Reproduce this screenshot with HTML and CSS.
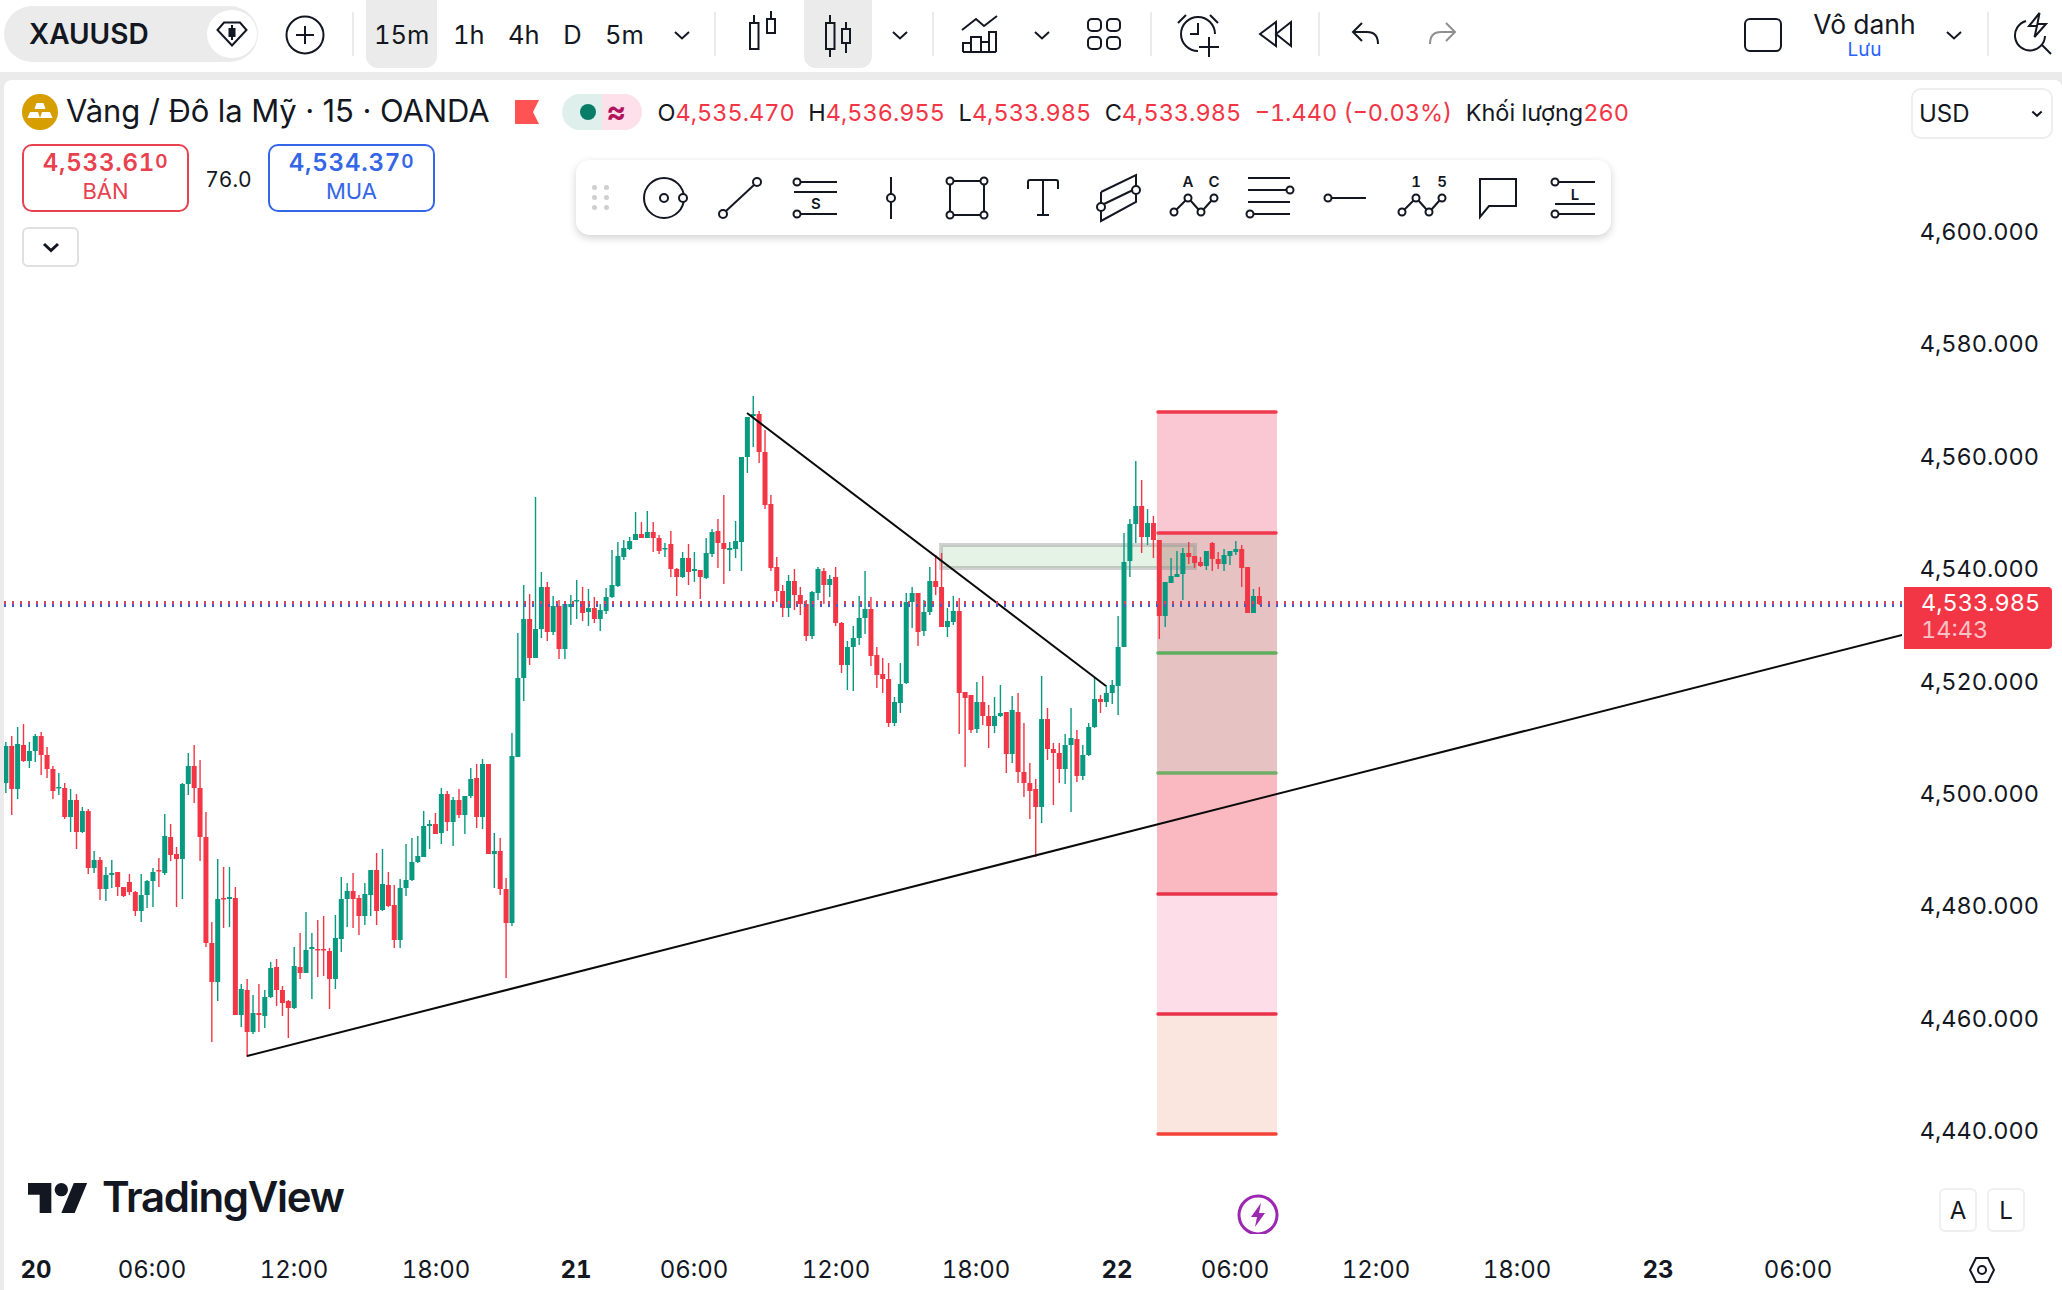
FILE: index.html
```html
<!DOCTYPE html>
<html lang="vi">
<head>
  <meta charset="UTF-8">
  <title>XAUUSD</title>
  <link rel="stylesheet" href="styles.css">
</head>
<body>
  <div class="app">
    <header class="topbar">
      <div class="symbol">
        <span class="symbol-name">XAUUSD</span>
        <span class="symbol-badge">
          <svg width="32" height="26" viewBox="0 0 32 26" class="ico"><path d="M8 1.5H24L30.5 9L16 24.5L1.5 9Z"/><path d="M16 4V19" /><rect x="13.5" y="8" width="5" height="7" fill="#131722"/></svg>
        </span>
      </div>
      <button class="add-btn">
        <svg width="40" height="40" viewBox="0 0 40 40" class="ico"><circle cx="20" cy="20" r="18.5"/><path d="M20 11V29M11 20H29"/></svg>
      </button>
      <span class="sep sep-first"></span>
      <div class="tabs">
        <button class="tab active">15m</button>
        <button class="tab">1h</button>
        <button class="tab">4h</button>
        <button class="tab">D</button>
        <button class="tab">5m</button>
      </div>
      <button class="chev"><svg width="18" height="10" viewBox="0 0 18 10" class="ico"><path d="M2 2L9 8.5L16 2"/></svg></button>
      <span class="sep"></span>
      <button class="icon-btn">
        <svg width="36" height="48" viewBox="0 0 36 48" class="ico"><rect x="6" y="13" width="8.5" height="26"/><path d="M10 5V13"/><rect x="23" y="9" width="8" height="14"/><path d="M27 1V9"/></svg>
      </button>
      <button class="icon-btn active">
        <svg width="36" height="48" viewBox="0 0 36 48" class="ico"><rect x="6" y="13" width="8.5" height="26"/><path d="M10 5V13M10 39V47"/><rect x="22" y="19" width="8" height="14"/><path d="M26 12V19M26 33V43"/></svg>
      </button>
      <button class="chev"><svg width="18" height="10" viewBox="0 0 18 10" class="ico"><path d="M2 2L9 8.5L16 2"/></svg></button>
      <span class="sep"></span>
      <button class="icon-btn">
        <svg width="38" height="38" viewBox="0 0 38 38" class="ico"><path d="M1 15L15 4L23 11L36 1"/><path d="M2 37V28H10V37M10 37V22H20V37M20 27H28V37M28 37V17H35V37M2 37H35"/></svg>
      </button>
      <button class="chev"><svg width="18" height="10" viewBox="0 0 18 10" class="ico"><path d="M2 2L9 8.5L16 2"/></svg></button>
      <button class="icon-btn grid-btn">
        <svg width="34" height="32" viewBox="0 0 34 32" class="ico"><rect x="1" y="1" width="13" height="12" rx="4"/><rect x="20" y="1" width="13" height="12" rx="4"/><rect x="1" y="19" width="13" height="12" rx="4"/><rect x="20" y="19" width="13" height="12" rx="4"/></svg>
      </button>
      <span class="sep"></span>
      <button class="icon-btn">
        <svg width="48" height="48" viewBox="0 0 48 48" class="ico"><path d="M41 24A17 17 0 1 0 24 41"/><path d="M24 13V24H16M4 13L12 5M44 13L36 5M35 27V47M25 37H45"/></svg>
      </button>
      <button class="icon-btn rewind-btn">
        <svg width="36" height="30" viewBox="0 0 36 30" class="ico"><path d="M2 15L18 3V27ZM18 15L33 3V27Z"/></svg>
      </button>
      <span class="sep"></span>
      <button class="icon-btn">
        <svg width="30" height="30" viewBox="0 0 30 30" class="ico"><path d="M11 4L2 13L11 22M2 13H16Q27 13 27 25"/></svg>
      </button>
      <button class="icon-btn">
        <svg width="30" height="30" viewBox="0 0 30 30" class="ico ico-muted"><path d="M19 4L28 13L19 22M28 13H14Q3 13 3 25"/></svg>
      </button>
      <div class="topbar-right">
        <span class="layout-box"></span>
        <div class="layout-name">
          <span class="layout-title">Vô danh</span>
          <span class="layout-save">Lưu</span>
        </div>
        <button class="chev"><svg width="18" height="10" viewBox="0 0 18 10" class="ico"><path d="M2 2L9 8.5L16 2"/></svg></button>
        <span class="sep sep-right"></span>
        <svg class="search-ico ico" width="44" height="46" viewBox="0 0 44 46"><path d="M27.5 3L17 16H25L22.5 27L34 14H25.4Z"/><path d="M14 11A15 15 0 1 0 33 26M29 34L39 44"/></svg>
      </div>
    </header>

    <main class="panel">
      <div class="chart-row">
        <div class="chart">
          <svg class="plot" width="1898" height="1154">
            <g transform="translate(-4 -80)">
              <rect class="zone" x="1157" y="412" width="120" height="121" fill="#f9c8d3"/>
              <rect class="zone" x="1157" y="533" width="120" height="240" fill="#e6c2c3"/>
              <rect class="zone" x="1157" y="773" width="120" height="121" fill="#fab8c0"/>
              <rect class="zone" x="1157" y="894" width="120" height="120" fill="#fddde8"/>
              <rect class="zone" x="1157" y="1014" width="120" height="120" fill="#fbe5df"/>
              <rect x="941" y="545" width="254" height="23" fill="#4caf50" fill-opacity=".15" stroke="#8c8c8c" stroke-opacity=".4" stroke-width="4"/>
              <g id="candles"></g>
              <path class="level" d="M1158 412H1276M1158 533H1276" stroke="#ee3a4c"/>
              <path class="level" d="M1158 653H1276" stroke="#5fae5f"/>
              <path class="level" d="M1158 773H1276" stroke="#70ad68"/>
              <path class="level" d="M1158 894H1276M1158 1014H1276" stroke="#e8334a"/>
              <path class="level" d="M1158 1134H1276" stroke="#f44336"/>
              <path class="trend" d="M247 1056L1904 634.5"/>
              <path class="trend" d="M747 413L1106 686"/>
              <path class="price-dots" d="M4 602.5H1904" stroke="#dc4360"/>
              <path class="price-dots" d="M4 605.5H1904" stroke="#5058b8"/>
            </g>
          </svg>

          <div class="legend">
            <svg class="gold" width="36" height="36" viewBox="0 0 36 36"><circle cx="18" cy="18" r="18" fill="#d69e00"/><path d="M14.5 9H21.5L23.5 15H12.5ZM8 18H16L18 24H5.5ZM20 18H28L30.5 24H18Z" fill="#fff"/></svg>
            <span class="legend-title">Vàng / Đô la Mỹ · 15 · OANDA</span>
            <svg class="flag" width="24" height="24" viewBox="0 0 24 24"><path d="M0 1Q0 0 1 0H24L18 12L24 24H1Q0 24 0 23Z" fill="#ff5252"/></svg>
            <div class="status">
              <span class="status-dot"><i></i></span>
              <span class="status-wave">≈</span>
            </div>
            <div class="ohlc">
              <span>O<b>4,535.470</b></span>
              <span>H<b>4,536.955</b></span>
              <span>L<b>4,533.985</b></span>
              <span>C<b>4,533.985</b></span>
              <span><b>−1.440 (−0.03%)</b></span>
              <span>Khối lượng<b>260</b></span>
            </div>
          </div>

          <div class="trade">
            <div class="trade-box sell">
              <span class="trade-price">4,533.61<small>0</small></span>
              <span class="trade-label">BÁN</span>
            </div>
            <span class="spread">76.0</span>
            <div class="trade-box buy">
              <span class="trade-price">4,534.37<small>0</small></span>
              <span class="trade-label">MUA</span>
            </div>
          </div>
          <button class="collapse"><svg width="18" height="10" viewBox="0 0 18 10" class="ico ico-bold"><path d="M2 2L9 8.5L16 2"/></svg></button>

          <div class="draw-bar">
            <div class="drag-dots"><i></i><i></i><i></i><i></i><i></i><i></i></div>
            <span class="tool"><svg width="44" height="44" viewBox="0 0 44 44" class="ico"><circle cx="22" cy="22" r="20"/><circle cx="22" cy="22" r="4"/><circle cx="41" cy="22" r="4" fill="#fff"/></svg></span>
            <span class="tool"><svg width="44" height="44" viewBox="0 0 44 44" class="ico"><circle cx="5" cy="38" r="4"/><circle cx="39" cy="6" r="4"/><path d="M8 35L36 9"/></svg></span>
            <span class="tool"><svg width="44" height="44" viewBox="0 0 44 44" class="ico"><circle cx="4" cy="6" r="3.5"/><circle cx="4" cy="38" r="3.5"/><path d="M8 6H44M1 16H44M8 38H44"/><text x="23" y="33" class="tool-text">S</text></svg></span>
            <span class="tool"><svg width="44" height="44" viewBox="0 0 44 44" class="ico"><circle cx="22" cy="22" r="4"/><path d="M22 1V18M22 26V43"/></svg></span>
            <span class="tool"><svg width="44" height="44" viewBox="0 0 44 44" class="ico"><path d="M8 5H36M8 39H36M5 8V36M39 8V36"/><circle cx="5" cy="5" r="3.5"/><circle cx="39" cy="5" r="3.5"/><circle cx="5" cy="39" r="3.5"/><circle cx="39" cy="39" r="3.5"/></svg></span>
            <span class="tool"><svg width="44" height="44" viewBox="0 0 44 44" class="ico"><path d="M7 13V6Q7 4 9 4H35Q37 4 37 6V13M22 4V39M16 39H28"/></svg></span>
            <span class="tool"><svg width="44" height="48" viewBox="0 0 44 48" class="ico"><path d="M4 18L39 1V12M39 20V28L4 47V37M4 29V18M7 30L36 16"/><circle cx="4" cy="33" r="4"/><circle cx="39" cy="16" r="4"/></svg></span>
            <span class="tool"><svg width="48" height="44" viewBox="0 0 48 44" class="ico"><circle cx="4" cy="36" r="3.5"/><circle cx="18" cy="22" r="3.5"/><circle cx="31" cy="36" r="3.5"/><circle cx="44" cy="22" r="3.5"/><path d="M6.5 33.5L15.500 24.500M20.500 24.500L28.500 33.500M33.500 33.500L41.500 24.500"/><text x="18" y="11" class="tool-text">A</text><text x="44" y="11" class="tool-text">C</text></svg></span>
            <span class="tool"><svg width="48" height="44" viewBox="0 0 48 44" class="ico"><path d="M2 2H44M2 14H40M2 26H44M8 38H44"/><circle cx="44" cy="14" r="3.5"/><circle cx="4" cy="38" r="3.500"/></svg></span>
            <span class="tool"><svg width="44" height="44" viewBox="0 0 44 44" class="ico"><circle cx="4" cy="22" r="3.5"/><path d="M8 22H42"/></svg></span>
            <span class="tool"><svg width="48" height="44" viewBox="0 0 48 44" class="ico"><circle cx="4" cy="36" r="3.5"/><circle cx="18" cy="22" r="3.5"/><circle cx="31" cy="36" r="3.5"/><circle cx="44" cy="22" r="3.5"/><path d="M6.5 33.5L15.500 24.500M20.500 24.500L28.500 33.500M33.500 33.500L41.500 24.500"/><text x="18" y="11" class="tool-text">1</text><text x="44" y="11" class="tool-text">5</text></svg></span>
            <span class="tool"><svg width="44" height="44" viewBox="0 0 44 44" class="ico"><path d="M4 3H40V30H13L4 41Z"/></svg></span>
            <span class="tool"><svg width="44" height="44" viewBox="0 0 44 44" class="ico"><circle cx="4" cy="6" r="3.5"/><circle cx="4" cy="38" r="3.5"/><path d="M8 6H44M4 28H44M8 38H44"/><text x="24" y="24" class="tool-text">L</text></svg></span>
          </div>

          <div class="tv-logo">
            <svg width="60" height="30" viewBox="0 4 36 18"><path d="M14 22H7V11H0V4h14v18zM28 22h-8l7.500-18h8L28 22z" fill="#131722"/><circle cx="20" cy="8" r="4" fill="#131722"/></svg>
            <span>TradingView</span>
          </div>

          <svg class="bolt" width="42" height="42" viewBox="0 0 42 42"><circle cx="21" cy="21" r="19" fill="#fff" stroke="#9c27b0" stroke-width="3"/><path d="M24 9L14 23H20L18 33L28 19H22Z" fill="#9c27b0"/></svg>
        </div>

        <aside class="price-axis">
          <span class="price">4,600.000</span>
          <span class="price">4,580.000</span>
          <span class="price">4,560.000</span>
          <span class="price">4,540.000</span>
          <span class="price">4,520.000</span>
          <span class="price">4,500.000</span>
          <span class="price">4,480.000</span>
          <span class="price">4,460.000</span>
          <span class="price">4,440.000</span>
          <div class="last-price">
            <span>4,533.985</span>
            <span class="last-time">14:43</span>
          </div>
          <div class="unit">USD<svg width="12" height="7" viewBox="0 0 18 10" class="ico ico-bold"><path d="M2 2L9 8.5L16 2"/></svg></div>
          <div class="scale-btns">
            <span class="scale-btn">A</span>
            <span class="scale-btn">L</span>
          </div>
        </aside>
      </div>
      <footer class="time-axis" id="timeAxis">
        <svg class="hex ico" width="28" height="30" viewBox="0 0 28 30"><path d="M8 3H20L26 15L20 27H8L2 15Z"/><circle cx="14" cy="15" r="4"/></svg>
      </footer>
    </main>
  </div>
  <script src="script.js"></script>
</body>
</html>
```

FILE: styles.css
```css
* { box-sizing: border-box; }
html, body { margin: 0; height: 100%; }
body { font-family: Inter, "Noto Sans", sans-serif; font-variant-numeric: tabular-nums; color: #131722; background: #ebebeb; overflow: hidden; }
button { font: inherit; color: inherit; background: none; border: none; padding: 0; }
.ico { fill: none; stroke: #131722; stroke-width: 2; display: block; overflow: visible; }
.ico-muted { stroke: #8f8f8f; }
.ico-bold { stroke-width: 3; }

.app { height: 100vh; display: flex; flex-direction: column; }

/* top bar */
.topbar { height: 72px; flex: none; background: #fff; display: flex; align-items: flex-start; padding: 0 6px 0 4px; }
.topbar > * { flex: none; }
.symbol { width: 254px; height: 56px; margin-top: 6px; background: #ebebeb; border-radius: 28px; display: flex; align-items: center; justify-content: space-between; padding: 0 1px 0 25px; }
.symbol-name { font-size: 28px; font-weight: 600; }
.symbol-badge { width: 50px; height: 48px; background: #fff; border-radius: 50%; display: flex; align-items: center; justify-content: center; }
.add-btn { margin: 15px 0 0 27px; }
.sep { width: 2px; height: 44px; margin: 12px 12px 0 8px; background: #ebebeb; }
.sep-first { margin-left: 27px; margin-right: 12px; }
.tabs { display: flex; gap: 7.5px; width: 288px; }
.tab { height: 68px; padding: 0 8px; font-size: 25.5px; border-radius: 0 0 12px 12px; line-height: 70px; }
.active { background: #ebebeb; }
.chev { width: 48px; height: 70px; margin-left: 4px; display: flex; align-items: center; justify-content: center; }
.icon-btn { width: 68px; height: 68px; margin-left: 0; display: flex; align-items: center; justify-content: center; border-radius: 0 0 12px 12px; }
.icon-btn + .icon-btn { margin-left: 8px; }
.grid-btn { margin: 0 4px 0 4px; }
.icon-btn.rewind-btn { margin-left: 10px; }
.topbar-right { margin-left: auto; display: flex; align-items: flex-start; }
.layout-box { width: 38px; height: 34px; margin-top: 18px; border: 2px solid #131722; border-radius: 6px; }
.layout-name { margin: 8px 0 0 31px; width: 103px; display: flex; flex-direction: column; align-items: center; }
.layout-title { font-size: 26.5px; line-height: 32px; }
.layout-save { font-size: 19px; line-height: 20px; color: #2962ff; }
.topbar-right .chev { margin-left: 14px; }
.sep-right { margin: 12px 0 0 9px; }
.search-ico { margin: 10px 0 0 23px; }

/* chart panel */
.panel { flex: 1; min-height: 0; margin: 8px 0 0 4px; background: #fff; border-radius: 8px 8px 0 0; display: flex; flex-direction: column; }
.chart-row { flex: 1; min-height: 0; display: flex; }
.chart { position: relative; flex: 1; overflow: hidden; }
.plot { position: absolute; left: 0; top: 0; }
.level { fill: none; stroke-width: 3.5; stroke-linecap: round; }
.trend { fill: none; stroke: #0a0a0a; stroke-width: 2; }
.price-dots { fill: none; stroke-width: 3; stroke-dasharray: 2 6; }

.legend { position: absolute; left: 18px; top: 14px; height: 36px; display: flex; align-items: center; white-space: nowrap; }
.legend-title { margin-left: 8px; padding-bottom: 3px; font-size: 31px; letter-spacing: -.1px; font-variant-numeric: normal; }
.flag { margin-left: 25px; }
.status { margin-left: 23px; width: 80px; height: 36px; display: flex; border-radius: 18px; overflow: hidden; }
.status-dot { width: 40px; background: #dff0ec; display: flex; align-items: center; justify-content: flex-end; padding-right: 6px; }
.status-dot i { width: 16px; height: 16px; border-radius: 50%; background: #077d68; }
.status-wave { width: 40px; background: #fde0ea; color: #b1135d; font-size: 30px; font-weight: 700; line-height: 34px; padding-left: 5px; }
.ohlc { margin-left: 16px; display: flex; gap: 13.5px; font-size: 23.5px; }
.ohlc b { font-weight: 400; color: #f23645; }

.trade { position: absolute; left: 18px; top: 64px; display: flex; align-items: center; }
.trade-box { width: 167px; height: 68px; border: 2px solid; border-radius: 10px; display: flex; flex-direction: column; align-items: center; }
.sell { color: #e8414f; }
.buy { color: #3566e8; }
.trade-price { font-size: 24px; font-weight: 600; line-height: 32px; letter-spacing: .8px; }
.trade-price small { font-size: 19px; vertical-align: 3px; }
.trade-label { font-size: 22px; line-height: 24px; }
.spread { width: 79px; text-align: center; font-size: 21px; padding-top: 2px; }
.collapse { position: absolute; left: 18px; top: 147px; width: 57px; height: 40px; border: 2px solid #e0e0e0; border-radius: 6px; display: flex; align-items: center; justify-content: center; }

.draw-bar { position: absolute; left: 572px; top: 80px; width: 1035px; height: 75px; background: #fff; border-radius: 14px; box-shadow: 0 3px 8px rgba(0, 0, 0, .18); display: flex; align-items: center; }
.drag-dots { flex: none; width: 50px; padding-left: 16px; display: grid; grid-template-columns: 5px 5px; gap: 5px 7px; }
.drag-dots i { width: 5px; height: 5px; border-radius: 50%; background: #cfcfcf; }
.tool { width: 75.8px; flex: none; display: flex; justify-content: center; }
.tool-text { font-family: Inter, sans-serif; font-size: 15px; font-weight: 600; text-anchor: middle; fill: #131722; stroke: none; }

.tv-logo { position: absolute; left: 24px; top: 1102px; display: flex; align-items: center; gap: 14px; }
.tv-logo span { font-size: 42px; font-weight: 600; letter-spacing: -1.3px; line-height: 30px; padding-bottom: 2px; }
.bolt { position: absolute; left: 1233px; top: 1114px; }

/* price axis */
.price-axis { position: relative; width: 160px; flex: none; padding: 137px 23px 0 0; display: flex; flex-direction: column; align-items: flex-end; gap: 82.4px; }
.price { font-size: 23.5px; line-height: 30px; }
.last-price { position: absolute; left: 2px; right: 10px; top: 507px; height: 62px; background: #f23645; color: #fff; border-radius: 0 4px 4px 0; display: flex; flex-direction: column; align-items: flex-start; padding: 2px 0 0 17px; font-size: 23.5px; line-height: 27px; }
.last-time { color: #fbc1c7; }
.unit { position: absolute; right: 9px; top: 8px; width: 142px; height: 51px; border: 2px solid #eee; border-radius: 10px; display: flex; align-items: center; justify-content: space-between; padding: 0 8px 0 6px; font-size: 24px; }
.scale-btns { position: absolute; right: 37px; top: 1108px; display: flex; gap: 10px; }
.scale-btn { width: 38px; height: 44px; border: 2px solid #f0f0f0; border-radius: 6px; display: flex; align-items: center; justify-content: center; font-size: 24px; }

/* time axis */
.time-axis { position: relative; height: 56px; flex: none; }
.tick { position: absolute; top: 16px; transform: translateX(-50%); font-size: 24px; line-height: 40px; }
.tick.day { font-weight: 700; }
.hex { position: absolute; left: 1964px; top: 21px; }
```

FILE: script.js
```js
// wick top, wick bottom, body top, body bottom, 1 = up
const rows = [
  [742,793,746,783,1],[736,815,746,789,0],[727,799,744,789,1],[724,762,745,761,0],[742,768,751,761,1],
  [734,762,736,751,1],[732,775,736,755,0],[747,778,755,769,0],[766,799,769,791,0],[773,795,787,788,1],
  [783,819,788,817,0],[789,832,800,817,1],[794,849,800,832,0],[807,833,811,832,1],[809,874,811,868,0],
  [851,873,860,868,1],[857,900,860,889,0],[867,901,875,889,1],[860,888,873,875,1],[872,896,872,887,0],
  [887,897,887,896,0],[874,895,882,892,0],[891,916,892,911,0],[874,922,895,911,1],[880,908,881,895,1],
  [868,907,872,881,1],[858,887,870,871,0],[814,875,836,873,1],[824,861,837,855,0],[847,907,854,859,0],
  [783,899,784,859,1],[753,795,766,784,1],[745,803,766,788,0],[760,861,788,837,0],[812,947,837,943,0],
  [922,1042,943,982,0],[859,1001,899,982,1],[867,928,898,899,0],[867,927,897,899,1],[887,1015,898,1015,0],
  [984,1027,989,1015,1],[979,1057,990,1032,0],[995,1034,1013,1032,1],[984,1032,1013,1015,0],[990,1028,997,1016,1],
  [962,998,968,997,1],[959,1006,967,990,0],[986,1016,990,1003,0],[1000,1038,1001,1008,0],[947,1009,966,1008,1],
  [933,979,967,973,0],[912,973,950,973,1],[933,999,947,949,1],[920,977,949,950,0],[916,976,949,950,0],
  [948,1009,951,979,0],[915,989,938,979,1],[877,952,899,939,1],[883,927,891,899,1],[873,928,891,899,0],
  [895,935,898,916,0],[883,925,894,916,1],[870,916,870,895,1],[853,925,870,911,0],[849,911,884,910,1],
  [872,907,885,906,0],[885,948,905,940,0],[879,948,888,940,1],[844,896,880,888,1],[838,881,862,880,1],
  [836,863,856,862,1],[811,857,826,857,1],[820,849,824,826,1],[813,834,824,834,0],[788,844,794,833,1],
  [791,831,794,822,0],[797,846,800,822,1],[789,818,800,815,0],[796,834,796,815,1],[768,798,779,796,1],
  [764,828,778,817,0],[759,829,764,817,1],[764,854,764,854,0],[833,888,851,854,1],[838,895,851,889,0],
  [878,978,889,923,0],[733,926,756,923,1],[633,757,678,757,1],[585,701,619,678,1],[594,665,619,658,0],
  [497,638,629,658,1],[572,638,587,629,1],[582,641,587,632,0],[596,635,606,632,1],[600,659,606,649,0],
  [604,659,604,649,1],[595,625,604,607,1],[580,619,600,601,1],[587,621,601,613,0],[589,626,608,612,1],
  [597,623,608,619,0],[604,631,610,619,1],[588,614,597,611,1],[550,598,585,597,1],[542,587,556,586,1],
  [540,560,548,557,1],[537,550,541,549,1],[512,540,534,540,1],[522,538,534,538,0],[511,538,532,538,1],
  [522,552,532,538,0],[535,554,538,551,0],[543,557,548,549,1],[531,577,544,569,0],[568,596,569,577,0],
  [552,578,558,577,1],[544,585,558,572,0],[552,582,569,571,1],[570,599,570,577,0],[538,579,553,578,1],
  [529,557,532,554,1],[519,568,531,543,0],[495,584,543,549,0],[542,571,548,550,1],[521,558,541,549,1],
  [457,571,457,542,1],[417,473,417,457,1],[396,447,414,416,1],[411,463,414,452,0],[430,509,452,505,0],
  [495,571,504,568,0],[557,602,567,591,0],[585,617,591,608,0],[575,617,581,608,1],[569,610,581,595,0],
  [587,615,595,604,0],[600,641,604,636,0],[591,639,592,636,1],[567,600,569,593,1],[568,604,571,585,0],
  [575,597,579,585,1],[567,626,577,623,0],[622,673,623,665,0],[641,690,647,665,1],[626,691,638,647,1],
  [596,645,618,638,1],[571,634,609,618,1],[597,666,609,656,0],[647,688,655,675,0],[658,693,674,679,0],
  [663,727,679,723,0],[697,726,702,723,1],[663,713,684,703,1],[593,684,602,683,1],[587,628,593,602,1],
  [593,646,593,632,0],[600,636,612,631,1],[567,615,581,612,1],[555,595,581,587,0],[553,627,587,627,0],
  [608,637,621,627,1],[596,625,611,622,1],[598,734,611,693,0],[692,767,692,698,0],[695,733,695,730,0],
  [682,733,702,729,1],[676,725,702,716,0],[705,748,716,726,0],[697,733,716,726,1],[685,717,713,716,1],
  [712,773,712,754,0],[696,763,710,754,1],[693,783,712,772,0],[723,797,772,783,0],[763,819,783,791,0],
  [779,857,789,807,0],[676,823,719,807,1],[708,760,719,749,0],[743,805,749,753,0],[743,783,753,769,0],
  [734,784,745,769,1],[708,812,738,745,1],[730,782,739,776,0],[745,780,755,776,1],[723,756,727,755,1],
  [678,728,699,727,1],[695,713,699,702,0],[685,707,693,702,1],[680,704,685,693,1],[616,715,647,686,1],
  [533,647,562,647,1],[519,577,524,561,1],[461,543,506,524,1],[480,553,506,537,0],[509,545,523,537,1],
  [516,558,523,540,0],[540,639,540,616,0],[582,627,582,616,1],[558,583,576,583,1],[551,577,574,577,1],
  [548,600,553,574,1],[542,564,553,557,0],[556,568,556,563,0],[557,567,562,566,0],[551,570,551,566,1],
  [542,571,543,559,0],[552,569,559,564,0],[549,571,555,564,1],[551,565,551,556,1],[541,555,549,552,1],
  [545,587,549,568,0],[567,613,567,613,0],[589,613,596,613,1],[587,605,596,604,0]
];

const svgNS = 'http://www.w3.org/2000/svg';
const candles = document.getElementById('candles');
const step = 5.885;

function addRect(x, y, w, h, color) {
  const r = document.createElementNS(svgNS, 'rect');
  r.setAttribute('x', x);
  r.setAttribute('y', y);
  r.setAttribute('width', w);
  r.setAttribute('height', h);
  r.setAttribute('fill', color);
  candles.appendChild(r);
}

rows.forEach((c, i) => {
  const x = 5.85 + i * step;
  const color = c[4] ? '#089981' : '#f23645';
  addRect(x - 0.7, c[0], 1.4, c[1] - c[0], color);
  addRect(x - 2.5, c[2], 5, Math.max(c[3] - c[2], 1.5), color);
});

// time axis ticks, x in page pixels
const ticks = [
  ['20', 36, 1], ['06:00', 152], ['12:00', 294], ['18:00', 436], ['21', 576, 1],
  ['06:00', 694], ['12:00', 836], ['18:00', 976], ['22', 1117, 1], ['06:00', 1235],
  ['12:00', 1376], ['18:00', 1517], ['23', 1658, 1], ['06:00', 1798]
];
const axis = document.getElementById('timeAxis');
ticks.forEach(t => {
  const el = document.createElement('span');
  el.className = t[2] ? 'tick day' : 'tick';
  el.textContent = t[0];
  el.style.left = (t[1] - 4) + 'px';
  axis.appendChild(el);
});
```
